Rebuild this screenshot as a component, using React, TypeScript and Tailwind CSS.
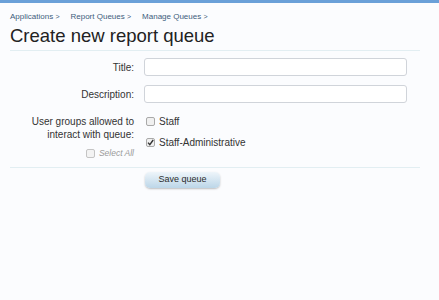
export default function App() {
	const crumbs = ["Applications", "Report Queues", "Manage Queues"];

	return (
		<div
			className="h-[300px] w-[439px] overflow-hidden bg-[#fbfcfe] text-[#333]"
			style={{ fontFamily: '"Liberation Sans", Arial, sans-serif' }}>
			<div className="h-[3px] bg-[#6aa0d8]" />
			<div className="px-[10px]">
				<div className="mt-[8px] flex h-[12px] items-center gap-[11px] text-[8px] text-[#3e5d7c]">
					{crumbs.map((c) => (
						<span key={c}>
							{c} <span className="text-[7px]">&gt;</span>
						</span>
					))}
				</div>
				<h1 className="mt-[2px] h-[22px] text-[18.5px] leading-[22px] text-[#222]">
					Create new report queue
				</h1>
				<div className="mt-[3px] mr-[9px] h-px bg-[#e2eef2]" />

				<div className="grid grid-cols-[124px_1fr] gap-x-[10px] pt-[7px] text-[10px] text-[#333]">
					<div className="flex h-[18px] items-center justify-end">Title:</div>
					<div className="h-[18px] w-[263px] rounded-[3px] border border-[#d0d4da] bg-white" />

					<div className="mt-[9px] flex h-[18px] items-center justify-end">
						Description:
					</div>
					<div className="mt-[9px] h-[18px] w-[263px] rounded-[3px] border border-[#d0d4da] bg-white" />

					<div className="mt-[12px] text-right leading-[13px]">
						User groups allowed to
						<br />
						interact with queue:
						<div className="mt-[6px] flex items-center justify-end gap-[4px] text-[8.5px] italic text-[#9a9a9a]">
							<span className="h-[9px] w-[9px] rounded-[2px] border border-[#c4c4c4] bg-[#f3f3f3]" />
							Select All
						</div>
					</div>
					<div className="mt-[12px] flex flex-col gap-[8px] leading-[13px]">
						<div className="flex items-center gap-[4px]">
							<span className="ml-[2px] h-[9px] w-[9px] rounded-[2px] border border-[#a9a9a9] bg-[#f0f0f0]" />
							Staff
						</div>
						<div className="flex items-center gap-[4px]">
							<span className="ml-[2px] flex h-[9px] w-[9px] items-center justify-center rounded-[2px] border border-[#a9a9a9] bg-[#f0f0f0]">
								<svg width="7" height="7" viewBox="0 0 7 7">
									<path d="M1 3.6 L2.8 5.6 L6.2 1" fill="none" stroke="#333" strokeWidth="1.4" />
								</svg>
							</span>
							Staff-Administrative
						</div>
					</div>
				</div>

				<div className="mt-[7px] mr-[9px] h-px bg-[#e2eef2]" />

				<div className="ml-[135px] mt-[4px] flex h-[16px] w-[75px] items-center justify-center rounded-[5px] bg-gradient-to-b from-[#eef5fa] to-[#bcd6e8] text-[9px] text-[#2b2b2b] shadow-[0_1px_2px_rgba(0,0,0,0.25)]">
					Save queue
				</div>
			</div>
		</div>
	);
}
